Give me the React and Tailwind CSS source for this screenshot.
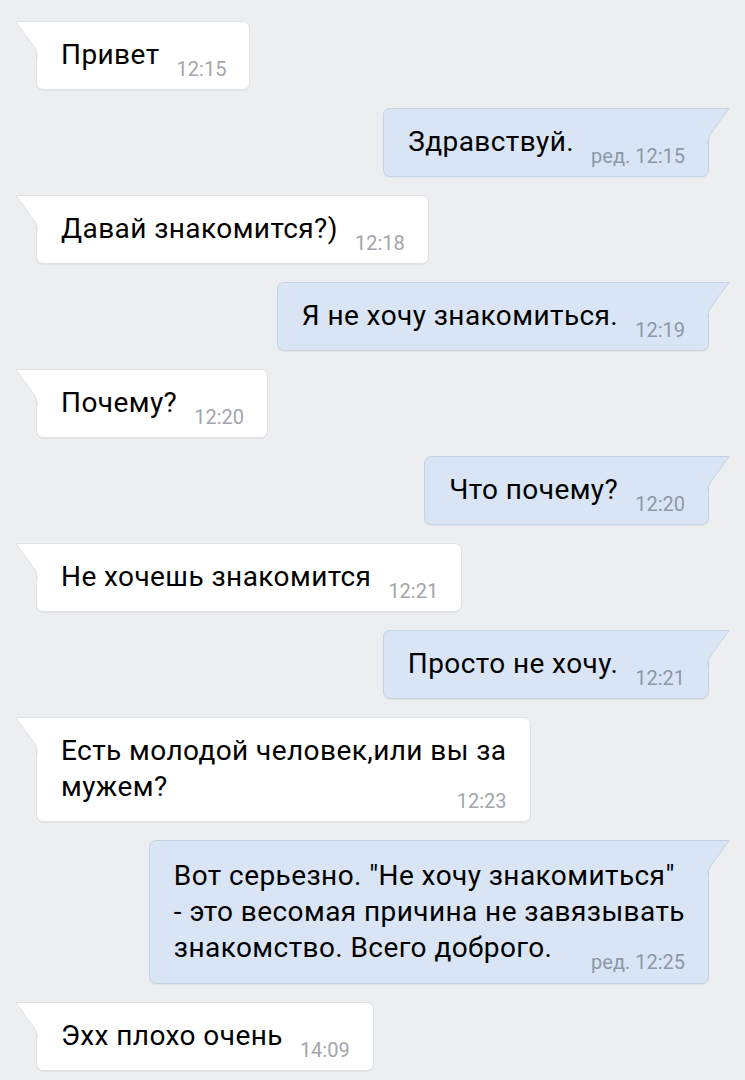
import React from 'react';

const messages = [
    { out: false, lines: ['Привет'], time: '12:15' },
    { out: true, lines: ['Здравствуй.'], time: 'ред. 12:15' },
    { out: false, lines: ['Давай знакомится?)'], time: '12:18' },
    { out: true, lines: ['Я не хочу знакомиться.'], time: '12:19' },
    { out: false, lines: ['Почему?'], time: '12:20' },
    { out: true, lines: ['Что почему?'], time: '12:20' },
    { out: false, lines: ['Не хочешь знакомится'], time: '12:21' },
    { out: true, lines: ['Просто не хочу.'], time: '12:21' },
    { out: false, lines: ['Есть молодой человек,или вы за', 'мужем?'], time: '12:23' },
    {
        out: true,
        tall: true,
        lines: ['Вот серьезно. "Не хочу знакомиться"', '- это весомая причина не завязывать', 'знакомство. Всего доброго.'],
        time: 'ред. 12:25'
    },
    { out: false, lines: ['Эхх плохо очень'], time: '14:09' }
];

const Tail = ({ out }) => (
    <svg
        width="24"
        height="36"
        viewBox="0 0 24 36"
        className={`absolute top-[-1px] ${out ? 'right-[-23px] -scale-x-100' : 'left-[-23px]'}`}
    >
        <path
            d="M24 0.5 H2 L19 24 Q23.5 29 23.5 36 H24 Z"
            fill={out ? '#d9e5f5' : '#ffffff'}
        />
        <path
            d="M24 0.5 H2 L19 24 Q23.5 29 23.5 36"
            fill="none"
            stroke={out ? '#c5d3e4' : '#dfe1e5'}
            strokeWidth="1"
        />
    </svg>
);

const Bubble = ({ out, tall, lines, time }) => {
    const last = lines[lines.length - 1];
    return (
        <div className={`flex ${out ? 'justify-end pr-[36px]' : 'pl-[36px]'}`}>
            <div
                className={`relative rounded-[7px] border pl-[24px] pr-[23px] shadow-[0_1px_1px_rgba(0,0,0,0.04)] ${
                    tall ? 'pt-[17px] pb-[17px]' : 'pt-[15px] pb-[16px]'
                } ${out ? 'rounded-tr-none bg-[#d9e5f5] border-[#c5d3e4]' : 'rounded-tl-none bg-white border-[#dfe1e5]'}`}
            >
                <Tail out={out} />
                <div className="text-[28px] leading-[36px] tracking-[0.015em] text-black whitespace-nowrap">
                    {lines.slice(0, -1).map(line => (
                        <div key={line}>{line}</div>
                    ))}
                    <div className="flex items-end justify-between gap-[17px]">
                        <span>{last}</span>
                        <span
                            className={`text-[20px] leading-none tracking-normal translate-y-[6px] ${
                                out ? 'text-[#8c98a7]' : 'text-[#a3a6ab]'
                            }`}
                        >
                            {time}
                        </span>
                    </div>
                </div>
            </div>
        </div>
    );
};

const App = () => {
    return (
        <div className="min-h-screen bg-[#edeef0] pt-[21px] pb-[10px] font-['Roboto','Liberation_Sans',sans-serif]">
            <div className="flex flex-col gap-[18px]">
                {messages.map((m, i) => (
                    <Bubble key={i} {...m} />
                ))}
            </div>
        </div>
    );
};

export default App;
